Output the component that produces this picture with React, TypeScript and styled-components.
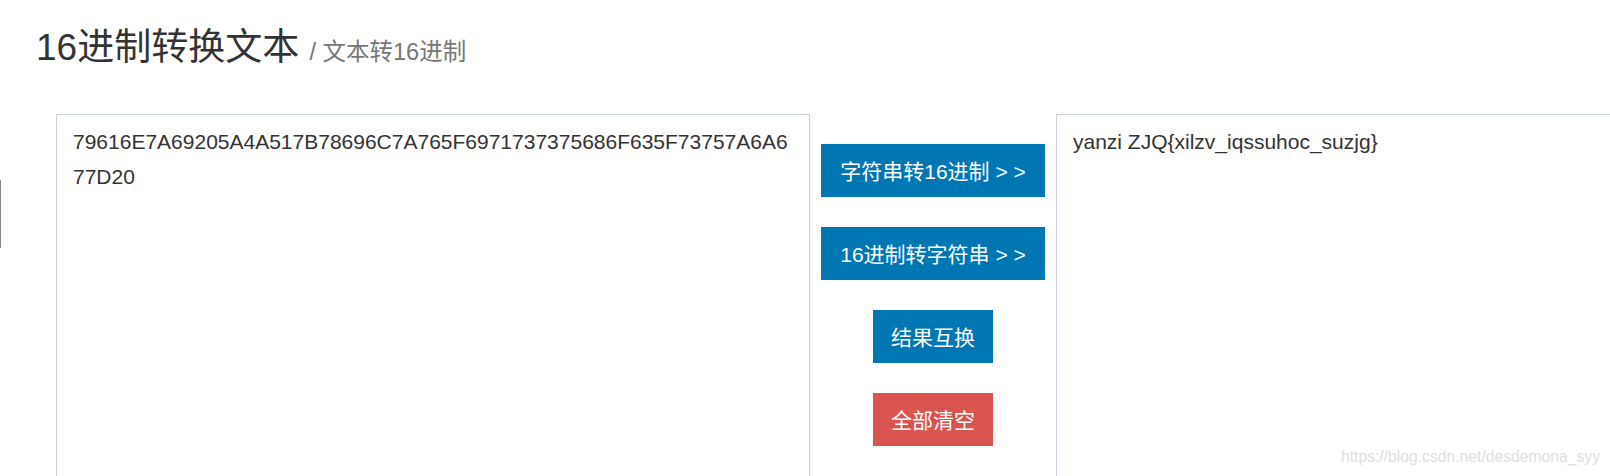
import React from "react";
import styled, { createGlobalStyle } from "styled-components";

const GlobalStyle = createGlobalStyle`
  html, body {
    margin: 0;
    padding: 0;
    background: #ffffff;
    overflow: hidden;
  }
  body {
    font-family: "Liberation Sans", Arial, "Noto Sans CJK SC", sans-serif;
    color: #333333;
  }
`;

const Page = styled.div`
  position: relative;
  width: 1610px;
  height: 476px;
  overflow: hidden;
`;

const EdgeMark = styled.div`
  position: absolute;
  left: 0;
  top: 180px;
  width: 1px;
  height: 68px;
  background: #8a8a8a;
`;

const Title = styled.h1`
  margin: 0;
  padding: 28px 0 0 36px;
  font-size: 37px;
  font-weight: 400;
  line-height: 1.1;
  color: #333333;
  font-family: "Liberation Sans", Arial, "Noto Sans CJK SC", sans-serif;
`;

const SubTitle = styled.small`
  font-size: 23.5px;
  color: #777777;
  font-weight: 400;
`;

const Workspace = styled.div`
  display: flex;
  align-items: flex-start;
  margin-top: 45px;
  padding-left: 56px;
`;

const TextBox = styled.textarea`
  box-sizing: border-box;
  flex: 0 0 754px;
  width: 754px;
  height: 420px;
  margin: 0;
  padding: 9px 16px;
  border: 1px solid #c9cfe0;
  border-radius: 0;
  resize: none;
  outline: none;
  overflow: hidden;
  background: #ffffff;
  color: #333333;
  font-family: "Liberation Sans", Arial, "Noto Sans CJK SC", sans-serif;
  font-size: 21px;
  line-height: 35px;
`;

const Actions = styled.div`
  flex: 0 0 246px;
  display: flex;
  flex-direction: column;
  align-items: center;
  gap: 30px;
  padding-top: 30px;
`;

const ActionButton = styled.button<{ $danger?: boolean; $wide?: boolean }>`
  box-sizing: border-box;
  display: inline-flex;
  align-items: center;
  justify-content: center;
  height: 53px;
  width: ${(p) => (p.$wide ? "224px" : "120px")};
  margin: 0;
  padding: 0;
  border: none;
  border-radius: 0;
  background: ${(p) => (p.$danger ? "#d9534f" : "#0077b3")};
  color: #ffffff;
  font-family: "Liberation Sans", Arial, "Noto Sans CJK SC", sans-serif;
  font-size: 21px;
  white-space: pre;
  cursor: pointer;
`;

const Watermark = styled.div`
  position: absolute;
  right: 10px;
  top: 448px;
  font-family: "Liberation Sans", Arial, sans-serif;
  font-size: 15.7px;
  color: #dedede;
`;

const hexText =
  "79616E7A69205A4A517B78696C7A765F6971737375686F635F73757A6A677D20";
const plainText = "yanzi ZJQ{xilzv_iqssuhoc_suzjg}";

export default function App() {
  return (
    <Page>
      <GlobalStyle />
      <EdgeMark />
      <Title>
        16进制转换文本 <SubTitle>/ 文本转16进制</SubTitle>
      </Title>
      <Workspace>
        <TextBox defaultValue={hexText} spellCheck={false} />
        <Actions>
          <ActionButton $wide>{"字符串转16进制 > >"}</ActionButton>
          <ActionButton $wide>{"16进制转字符串 > >"}</ActionButton>
          <ActionButton>结果互换</ActionButton>
          <ActionButton $danger>全部清空</ActionButton>
        </Actions>
        <TextBox defaultValue={plainText} spellCheck={false} />
      </Workspace>
      <Watermark>https://blog.csdn.net/desdemona_syy</Watermark>
    </Page>
  );
}
